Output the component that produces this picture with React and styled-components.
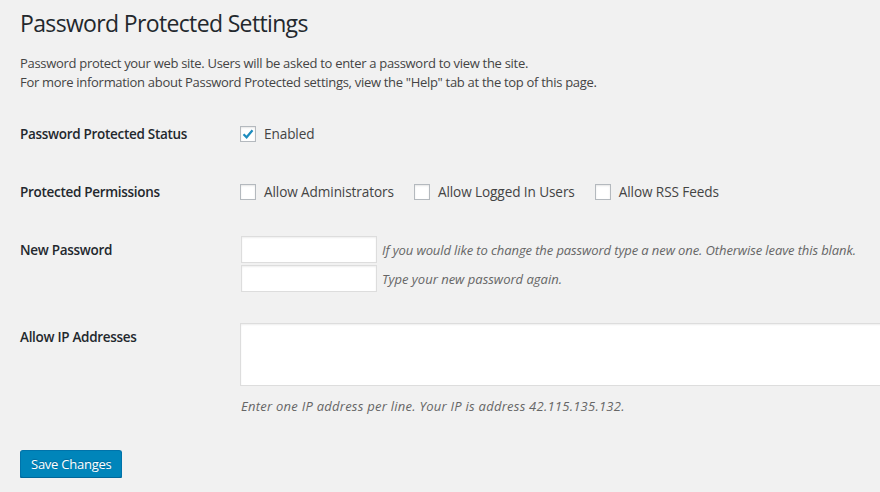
import React from 'react';
import styled, { createGlobalStyle } from 'styled-components';

const GlobalStyle = createGlobalStyle`
	html, body {
		margin: 0;
		padding: 0;
		background: #f1f1f1;
		overflow: hidden;
	}
	body {
		font-family: 'Open Sans', 'Noto Sans', sans-serif;
		font-size: 13px;
		color: #444;
	}
`;

const Wrap = styled.div`
	padding: 9px 0 0 20px;
	width: 900px;
`;

const Title = styled.h1`
	margin: 0;
	font-size: 23px;
	font-weight: 400;
	line-height: 29px;
	letter-spacing: -0.65px;
	color: #23282d;
`;

const Intro = styled.p`
	margin: 16px 0 0;
	line-height: 19px;
	font-size: 13px;
	letter-spacing: -0.3px;
`;

const Table = styled.div`
	display: flex;
	flex-direction: column;
	margin-top: 22px;
`;

const Row = styled.div`
	display: grid;
	grid-template-columns: 220px 1fr;
	padding-bottom: ${({ $bottom }) => $bottom}px;
`;

const Label = styled.div`
	padding-top: 10px;
	font-size: 13.5px;
	font-weight: 600;
	line-height: 20px;
	letter-spacing: -0.3px;
	color: #23282d;
`;

const Field = styled.div`
	padding-top: ${({ $top }) => $top}px;
	display: flex;
	flex-direction: column;
	gap: 2px;
`;

const Choices = styled.div`
	display: flex;
	align-items: center;
	gap: 20px;
	line-height: 20px;
	font-size: 13.6px;
	letter-spacing: -0.1px;
`;

const Choice = styled.label`
	display: flex;
	align-items: center;
	gap: 8px;
	color: #444;
`;

const Box = styled.span`
	width: 16px;
	height: 16px;
	box-sizing: border-box;
	border: 1px solid #b4b9be;
	background: #fff;
	box-shadow: inset 0 1px 2px rgba(0, 0, 0, 0.1);
	display: flex;
	align-items: center;
	justify-content: center;
`;

const InputLine = styled.div`
	display: flex;
	align-items: center;
	gap: 5px;
	padding-left: 1px;
`;

const TextInput = styled.div`
	width: 136px;
	height: 27px;
	box-sizing: border-box;
	border: 1px solid #ddd;
	background: #fff;
	box-shadow: inset 0 1px 2px rgba(0, 0, 0, 0.07);
`;

const Hint = styled.span`
	font-style: italic;
	font-size: 13px;
	color: #666;
	line-height: 20px;
	letter-spacing: ${({ $spacing }) => $spacing || 0}px;
	margin-top: ${({ $gap }) => $gap || 0}px;
	padding-left: ${({ $indent }) => $indent || 0}px;
`;

const TextArea = styled.div`
	width: 700px;
	height: 63px;
	box-sizing: border-box;
	border: 1px solid #ddd;
	background: #fff;
	box-shadow: inset 0 1px 2px rgba(0, 0, 0, 0.07);
`;

const SaveButton = styled.button`
	margin-top: 34px;
	height: 28px;
	padding: 0 10px 1px;
	font-family: inherit;
	font-size: 13px;
	line-height: 26px;
	letter-spacing: -0.25px;
	color: #fff;
	background: #0085ba;
	border: 1px solid #0073aa;
	border-bottom-color: #006799;
	border-radius: 3px;
	box-shadow: 0 1px 0 #006799;
	text-shadow: 0 -1px 1px #006799;
`;

const Check = () => (
	<svg width="12" height="12" viewBox="0 0 12 12">
		<path d="M1.5 6.2 L4.6 9.3 L10.5 2.2" fill="none" stroke="#1e8cbe" strokeWidth="2.2" />
	</svg>
);

const Checkbox = ({ checked, children }) => (
	<Choice>
		<Box>{checked ? <Check /> : null}</Box>
		{children}
	</Choice>
);

export default function App() {
	return (
		<>
			<GlobalStyle />
			<Wrap>
				<Title>Password Protected Settings</Title>
				<Intro>
					Password protect your web site. Users will be asked to enter a password to view the site.
					<br />
					For more information about Password Protected settings, view the "Help" tab at the top of this page.
				</Intro>
				<Table>
					<Row $bottom={28}>
						<Label>Password Protected Status</Label>
						<Field $top={10}>
							<Choices>
								<Checkbox checked>Enabled</Checkbox>
							</Choices>
						</Field>
					</Row>
					<Row $bottom={28}>
						<Label>Protected Permissions</Label>
						<Field $top={10}>
							<Choices>
								<Checkbox>Allow Administrators</Checkbox>
								<Checkbox>Allow Logged In Users</Checkbox>
								<Checkbox>Allow RSS Feeds</Checkbox>
							</Choices>
						</Field>
					</Row>
					<Row $bottom={25}>
						<Label>New Password</Label>
						<Field $top={6}>
							<InputLine>
								<TextInput />
								<Hint $spacing={-0.1}>If you would like to change the password type a new one. Otherwise leave this blank.</Hint>
							</InputLine>
							<InputLine>
								<TextInput />
								<Hint>Type your new password again.</Hint>
							</InputLine>
						</Field>
					</Row>
					<Row $bottom={0}>
						<Label>Allow IP Addresses</Label>
						<Field $top={6}>
							<TextArea />
							<Hint $gap={8} $indent={1} $spacing={0.25}>Enter one IP address per line. Your IP is address 42.115.135.132.</Hint>
						</Field>
					</Row>
				</Table>
				<SaveButton>Save Changes</SaveButton>
			</Wrap>
		</>
	);
}
